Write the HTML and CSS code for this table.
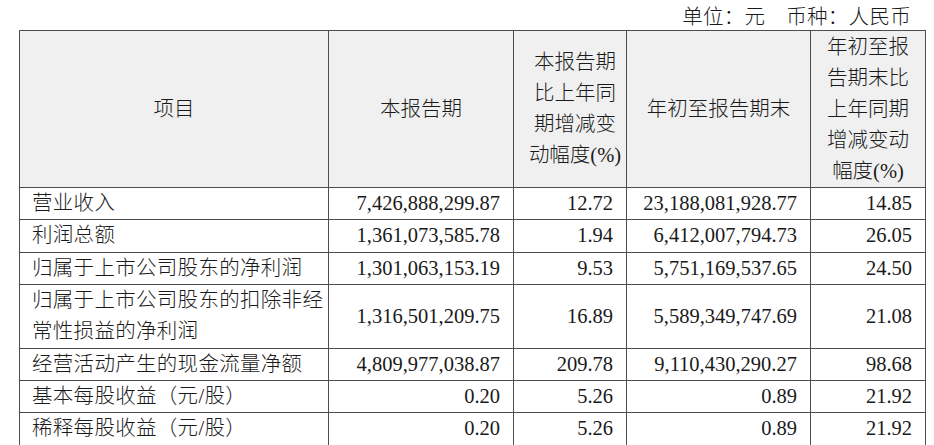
FILE: index.html
```html
<!DOCTYPE html>
<html lang="zh-CN">
<head>
<meta charset="utf-8">
<title>主要财务数据</title>
<link rel="stylesheet" href="styles.css">
</head>
<body>
<div class="page">
  <div class="unit">单位：元　币种：人民币</div>
  <table class="fin">
    <colgroup>
      <col class="c1"><col class="c2"><col class="c3"><col class="c4"><col class="c5">
    </colgroup>
    <thead>
      <tr class="head">
        <th>项目</th>
        <th>本报告期</th>
        <th class="h3">本报告期<br>比上年同<br>期增减变<br>动幅度(%)</th>
        <th>年初至报告期末</th>
        <th>年初至报<br>告期末比<br>上年同期<br>增减变动<br>幅度(%)</th>
      </tr>
    </thead>
    <tbody>
      <tr><td class="name">营业收入</td><td class="num">7,426,888,299.87</td><td class="num">12.72</td><td class="num">23,188,081,928.77</td><td class="num">14.85</td></tr>
      <tr><td class="name">利润总额</td><td class="num">1,361,073,585.78</td><td class="num">1.94</td><td class="num">6,412,007,794.73</td><td class="num">26.05</td></tr>
      <tr><td class="name">归属于上市公司股东的净利润</td><td class="num">1,301,063,153.19</td><td class="num">9.53</td><td class="num">5,751,169,537.65</td><td class="num">24.50</td></tr>
      <tr><td class="name">归属于上市公司股东的扣除非经<br>常性损益的净利润</td><td class="num">1,316,501,209.75</td><td class="num">16.89</td><td class="num">5,589,349,747.69</td><td class="num">21.08</td></tr>
      <tr><td class="name">经营活动产生的现金流量净额</td><td class="num">4,809,977,038.87</td><td class="num">209.78</td><td class="num">9,110,430,290.27</td><td class="num">98.68</td></tr>
      <tr><td class="name">基本每股收益（元/股）</td><td class="num">0.20</td><td class="num">5.26</td><td class="num">0.89</td><td class="num">21.92</td></tr>
      <tr><td class="name">稀释每股收益（元/股）</td><td class="num">0.20</td><td class="num">5.26</td><td class="num">0.89</td><td class="num">21.92</td></tr>
    </tbody>
  </table>
</div>
</body>
</html>
```

FILE: styles.css
```css
html, body {
  margin: 0;
  padding: 0;
  background: #ffffff;
}

body {
  font-family: "Liberation Serif", "Noto Sans CJK SC", serif;
  font-size: 20.5px;
  color: #1a1a1a;
}

.page {
  padding-left: 19px;
  width: 906px;
}

.unit {
  text-align: right;
  padding-right: 14px;
  height: 30px;
  line-height: 34px;
  font-weight: 300;
  letter-spacing: 0.3px;
  white-space: nowrap;
}

.fin {
  border-collapse: collapse;
  table-layout: fixed;
  width: 906px;
}

.c1 { width: 309px; }
.c2 { width: 185px; }
.c3 { width: 113px; }
.c4 { width: 184px; }
.c5 { width: 115px; }

.fin th,
.fin td {
  border: 1px solid #4d4d4d;
  padding: 0;
  line-height: 31px;
  white-space: nowrap;
  font-weight: 300;
}

.fin tbody td {
  line-height: 31.35px;
}

.head th {
  background: #f0f0f0;
  text-align: center;
  vertical-align: middle;
  height: 156px;
  line-height: 31px;
}

.head .h3 {
  padding-left: 10px;
}

.name {
  text-align: left;
  letter-spacing: 0.3px;
  padding-left: 12px !important;
}

.num {
  text-align: right;
  padding-right: 13px !important;
}
```
